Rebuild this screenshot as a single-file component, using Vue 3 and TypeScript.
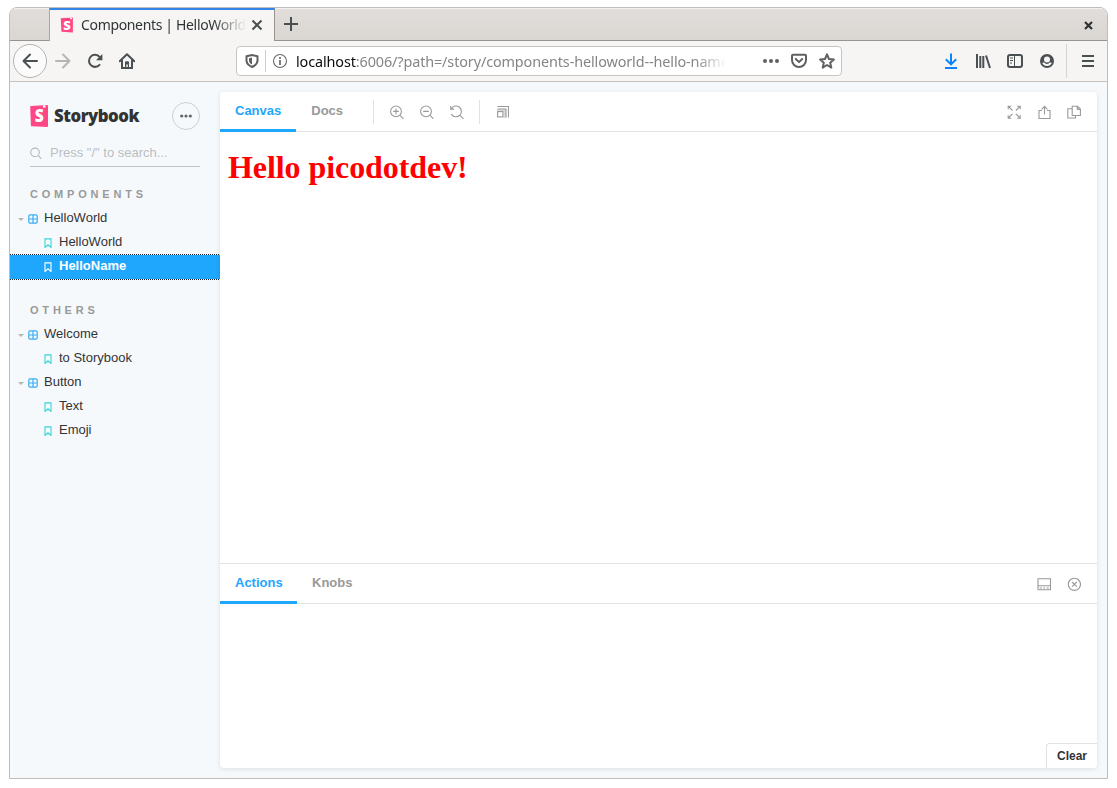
<script setup lang="ts">
interface StoryRow {
  label: string
  kind: 'component' | 'story'
  selected?: boolean
}
interface StoryGroup {
  title: string
  rows: StoryRow[]
}

const groups: StoryGroup[] = [
  {
    title: 'COMPONENTS',
    rows: [
      { label: 'HelloWorld', kind: 'component' },
      { label: 'HelloWorld', kind: 'story' },
      { label: 'HelloName', kind: 'story', selected: true },
    ],
  },
  {
    title: 'OTHERS',
    rows: [
      { label: 'Welcome', kind: 'component' },
      { label: 'to Storybook', kind: 'story' },
      { label: 'Button', kind: 'component' },
      { label: 'Text', kind: 'story' },
      { label: 'Emoji', kind: 'story' },
    ],
  },
]
</script>

<template>
  <div class="window">
    <header class="titlebar">
      <div class="tab">
        <svg class="favicon" width="14" height="16" viewBox="0 0 14 16">
          <path d="M.8 1.3 12.9.4v15.2l-11.500-.8z" fill="#ff4785" />
          <path d="M10.200.5h1.600v2l-.8-.5-.8.5z" fill="#fff" />
          <text x="6.900" y="12.700" text-anchor="middle" class="mark-small">S</text>
        </svg>
        <span class="tab-title">Components | HelloWorld</span>
        <svg class="tab-close" width="12" height="12" viewBox="0 0 12 12">
          <path d="m1.500 1.500 9 9m0-9-9 9" class="ff" />
        </svg>
      </div>
      <svg class="new-tab" width="16" height="16" viewBox="0 0 16 16">
        <path d="M8 1v14M1 8h14" class="ff" />
      </svg>
      <svg class="win-close" width="9" height="9" viewBox="0 0 9 9">
        <path d="m1 1 7 7m0-7-7 7" stroke="#2e3436" stroke-width="2.200" fill="none" />
      </svg>
    </header>

    <nav class="toolbar">
      <span class="back">
        <svg width="16" height="16" viewBox="0 0 16 16">
          <path d="M15 8H1.500M8 1.500 1.500 8 8 14.500" class="ff round" />
        </svg>
      </span>
      <svg class="nav-icon forward" width="16" height="16" viewBox="0 0 16 16">
        <path d="M1 8h13.500M8 1.500 14.500 8 8 14.500" class="ff round faded" />
      </svg>
      <svg class="nav-icon" width="16" height="16" viewBox="0 0 16 16">
        <path d="M13 11.200A6 6 0 1 1 12.600 4" class="ff" />
        <path d="M15.400 1v6.300H9z" fill="#4a4f51" />
      </svg>
      <svg class="nav-icon" width="16" height="16" viewBox="0 0 16 16">
        <path d="M.7 8.300 8 1.200l7.300 7.100" class="ff round" />
        <path d="M3 7v8h10V7" class="ff" />
        <path d="M6 14.500V9.300q0-1 1-1h2q1 0 1 1v5.200H8.800v-3H7.300v3z" fill="#4a4f51" />
      </svg>

      <div class="urlbar">
        <svg class="shield" width="14" height="16" viewBox="0 0 14 16">
          <path d="M7 2 12.500 3.300v4.200c0 3-2.300 5-5.500 6.500-3.200-1.500-5.500-3.500-5.500-6.500V3.300z" stroke="#5f6061" stroke-width="2" fill="none" stroke-linejoin="round" />
          <path d="M7 4.500v7C5 10.500 4 9.200 4 7.400V5.200z" fill="#5f6061" />
        </svg>
        <i class="url-divider"></i>
        <svg class="info" width="16" height="16" viewBox="0 0 16 16">
          <circle cx="8" cy="8" r="6.500" fill="none" stroke="#69696b" stroke-width="1.100" />
          <path d="M8 7v5M8 4v2" stroke="#69696b" stroke-width="1.700" />
        </svg>
        <span class="url"><b>localhost</b>:6006/?path=/story/components-helloworld--hello-name</span>
        <svg class="dots" width="16" height="16" viewBox="0 0 16 16">
          <circle cx="2" cy="8" r="2" /><circle cx="8" cy="8" r="2" /><circle cx="14" cy="8" r="2" />
        </svg>
        <svg class="pocket" width="16" height="16" viewBox="0 0 16 16">
          <path d="M2 1.800h12q1 0 1 1V7a7 7 0 0 1-14 0V2.800q0-1 1-1z" class="dim" />
          <path d="m4.800 6 3.200 3.100L11.200 6" class="dim round" />
        </svg>
        <svg width="16" height="16" viewBox="0 0 16 16">
          <path d="m8 1.400 2 4.600 4.900.4-3.700 3.300 1.100 4.900L8 12l-4.300 2.600 1.100-4.900L1.100 6.400 6 6z" class="dim" stroke-linejoin="round" />
        </svg>
      </div>

      <div class="toolbar-right">
        <svg width="16" height="16" viewBox="0 0 16 16">
          <path d="M8 .5V11M2.800 6.200 8 11.400l5.200-5.200M2 15h12" fill="none" stroke="#0a84ff" stroke-width="2" />
        </svg>
        <svg width="16" height="16" viewBox="0 0 16 16">
          <path d="M2 1v14M5.300 3v12M8.300 3v12M11 2.500 15 15" class="ff thin" />
        </svg>
        <svg width="16" height="16" viewBox="0 0 16 16">
          <rect x="1" y="2" width="14" height="12" rx="2" class="ff" />
          <path d="M7.500 2v12M3 5h3M3 7.500h3M3 10h2" stroke="#4a4f51" stroke-width="1" />
        </svg>
        <svg width="16" height="16" viewBox="0 0 16 16">
          <circle cx="8" cy="8" r="7" fill="#4a4f51" />
          <circle cx="8" cy="6.500" r="3" fill="#f6f5f4" />
          <path d="M3.200 10q1.300 3 4.800 3t4.800-3L11 9.300Q9.800 11 8 11T5 9.300z" fill="#f6f5f4" />
        </svg>
        <i class="menu-divider"></i>
        <svg width="16" height="16" viewBox="0 0 16 16">
          <path d="M2 3h12M2 8h12M2 13h12" class="ff" />
        </svg>
      </div>
    </nav>

    <main class="content">
      <aside class="sidebar">
        <div class="brand">
          <svg width="18" height="22" viewBox="0 0 18 22">
            <path d="M1.200.9 17 .1q1 0 1 .8v20.200q0 1-1 .9L1.700 21.300q-.8 0-.8-.9L.2 2q0-1 1-1.100z" fill="#ff4785" />
            <path d="m13.100.3 2.300-.2.100 3-1.200-.9-1.300.9z" fill="#fff" />
            <text transform="translate(9.200 17.300) scale(.92 1)" text-anchor="middle" class="mark">S</text>
          </svg>
          <span class="brand-name">Storybook</span>
          <span class="more">
            <svg width="12" height="4" viewBox="0 0 12 4" fill="#666">
              <circle cx="1.700" cy="2" r="1.600" /><circle cx="6" cy="2" r="1.600" /><circle cx="10.300" cy="2" r="1.600" />
            </svg>
          </span>
        </div>
        <div class="search">
          <svg width="12" height="12" viewBox="0 0 12 12">
            <circle cx="5" cy="5.400" r="4.300" class="line" /><path d="m8.200 8.600 3.100 3.100" class="line" />
          </svg>
          <span>Press "/" to search...</span>
        </div>
        <section v-for="group in groups" :key="group.title" class="group">
          <h2>{{ group.title }}</h2>
          <div
            v-for="(row, index) in group.rows"
            :key="index"
            class="row"
            :class="[row.kind, { selected: row.selected }]"
          >
            <template v-if="row.kind === 'component'">
              <i class="caret"></i>
              <svg width="10" height="10" viewBox="0 0 10 10">
                <rect x=".8" y=".8" width="8.400" height="8.400" rx="1.400" class="grid" />
                <path d="M5 1v8M1 5h8" class="grid" />
              </svg>
            </template>
            <svg v-else width="8" height="10" viewBox="0 0 8 10">
              <path d="M1 .9h6v8.600L4 6.800 1 9.500z" class="bookmark" />
            </svg>
            <span>{{ row.label }}</span>
          </div>
        </section>
      </aside>

      <div class="card">
        <div class="bar">
          <span class="bar-tab active">Canvas</span>
          <span class="bar-tab">Docs</span>
          <i class="divider first"></i>
          <div class="tools">
            <svg width="14" height="14" viewBox="0 0 14 14">
              <circle cx="6" cy="6.400" r="5.400" class="line" /><path d="m10 10.400 3.500 3.400M3.200 6.400h5.600M6 3.600v5.600" class="line" />
            </svg>
            <svg width="14" height="14" viewBox="0 0 14 14">
              <circle cx="6" cy="6.400" r="5.400" class="line" /><path d="m10 10.400 3.500 3.400M3.200 6.400h5.600" class="line" />
            </svg>
            <svg width="14" height="14" viewBox="0 0 14 14">
              <path d="M1.300 3.700a5.400 5.400 0 1 1 0 5.400M.7.900v3.200h3.400M10 10.400l3.500 3.400" class="line" />
            </svg>
          </div>
          <i class="divider second"></i>
          <svg class="viewport" width="12" height="12" viewBox="0 0 12 12">
            <path d="M.5.500h11v11M.5 3h8.500v8.500" class="line" />
            <rect x=".6" y="5.600" width="5.300" height="5.300" class="line" />
            <path d="M0 3h9v9H6.500V5.500H0z" fill="#999" opacity=".35" />
          </svg>
          <div class="tools end">
            <svg width="14" height="14" viewBox="0 0 14 14">
              <path d="M1.200 4.200V1.200h3M1.400 1.400l4.100 4.100M10.200 1.200h3v3M13 1.400 8.900 5.500M1.200 10.200v3h3M1.400 13l4.100-4.100M10.200 13.200h3v-3M13 13 8.900 8.900" class="line" />
            </svg>
            <svg width="14" height="14" viewBox="0 0 14 14">
              <path d="M5 5.500H2v8h11v-8h-3M7.500 9.500V1.500M4.600 4.300l2.900-2.900 2.900 2.900" class="line" />
            </svg>
            <svg width="14" height="14" viewBox="0 0 14 14">
              <path d="M5 3.700H.8v9.300h7.700v-2.400" class="line" />
              <path d="M5.200 1.200h5.300l2.900 2.900v6.400H5.200zM10.300 1.200v3.200h3.100" class="line" />
            </svg>
          </div>
        </div>
        <div class="preview"><h1>Hello picodotdev!</h1></div>
        <div class="bar addon-bar">
          <span class="bar-tab active actions-tab">Actions</span>
          <span class="bar-tab">Knobs</span>
          <div class="tools end">
            <svg width="14" height="14" viewBox="0 0 14 14">
              <path d="M1 1.700h12.500v11H1zM1 8.700h12.500" class="line" />
              <path d="M2.800 11h2M6.200 11h2M9.700 11h2" class="line" />
            </svg>
            <svg width="14" height="14" viewBox="0 0 14 14">
              <circle cx="7.400" cy="7.300" r="6.100" class="line" /><path d="m5.100 5 4.600 4.600m0-4.600L5.100 9.600" class="line" />
            </svg>
          </div>
        </div>
        <div class="actions"><button class="clear">Clear</button></div>
      </div>
    </main>
  </div>
</template>

<style>
body { background: #fff; }
</style>

<style scoped>
* { box-sizing: border-box; }
svg { flex: none; display: block; }
.window {
  width: 1099px; height: 772px; margin: 7px 9px 0; overflow: hidden;
  display: flex; flex-direction: column;
  border: 1px solid #bfbdbb; border-radius: 8px 8px 0 0;
}
.titlebar {
  height: 33px; flex: none; display: flex; align-items: center;
  padding-left: 39px; padding-right: 14px;
  background: linear-gradient(#e1dedb, #dad6d2);
  border-bottom: 1px solid #979390;
  box-shadow: inset 0 1px #f4f2f1;
}
.tab {
  width: 226px; height: 33px; margin-bottom: -1px; padding: 0 0 2px 10px;
  display: flex; align-items: center;
  background: #f6f5f4; border-top: 2px solid #3584e4;
  border-left: 1px solid #aaa6a3; border-right: 1px solid #979390;
}
.tab-title {
  width: 166px; margin-left: 7px; overflow: hidden; white-space: nowrap;
  font: 14px/20px "Noto Sans", sans-serif; letter-spacing: -.34px; color: #2e3436;
  mask-image: linear-gradient(to right, #000 132px, transparent 165px);
}
.tab-close { margin-left: 4px; }
.new-tab { margin-left: 8px; }
.win-close { margin-left: auto; margin-top: 2px; }
.ff { fill: none; stroke: #4a4f51; stroke-width: 2; }
.round { stroke-linecap: round; stroke-linejoin: round; }
.faded { stroke: #b5b5b5; }
.mark, .mark-small { font: 800 17px "Open Sans", sans-serif; fill: #fff; }
.mark-small { font-size: 13px; }

.toolbar {
  height: 41px; flex: none; display: flex; align-items: center;
  padding-left: 3px; background: #f6f5f4; border-bottom: 1px solid #c5c2c0;
}
.back {
  width: 34px; height: 34px; display: flex; align-items: center; justify-content: center;
  border: 1px solid #b5b3b1; border-radius: 50%; background: #fbfbfb;
}
.nav-icon { margin-right: 16px; }
.forward { margin-left: 8px; }
.urlbar {
  width: 606px; height: 30px; margin-left: 85px; padding: 0 6px 0 8px;
  display: flex; align-items: center;
  border: 1px solid #c9c4c0; border-radius: 4px; background: #fff;
}
.url-divider { width: 1px; height: 22px; margin-left: 6px; background: #ccc; }
.info { margin-left: 6px; }
.url {
  width: 431px; margin-left: 8px; padding-top: 1px; overflow: hidden; white-space: nowrap;
  font: 14.400px/22px "Noto Sans", sans-serif; letter-spacing: -.11px; color: #858585;
  mask-image: linear-gradient(to right, #000 400px, transparent 430px);
}
.url b { font-weight: 400; color: #0c0c0d; }
.dots { margin-left: auto; fill: #5f6061; }
.pocket { margin: 0 12px; }
.dim { fill: none; stroke: #5f6061; stroke-width: 2; }
.thin { stroke-width: 2; }
.toolbar-right { display: flex; align-items: center; gap: 16px; margin-left: auto; padding-right: 11px; }
.menu-divider { width: 1px; height: 34px; margin: 0 -3px 0 -5px; background: #d6d3d1; }

.content { flex: 1; display: flex; min-height: 0; padding: 10px 10px 10px 0; background: #f6f9fc; }
.sidebar { width: 210px; flex: none; font: 13px/20px "Liberation Sans", sans-serif; color: #333; }
.brand { height: 28px; margin: 10px 20px 0; display: flex; align-items: center; }
.brand-name {
  margin-left: 6px; font: 800 16.800px/28px "Open Sans", sans-serif; letter-spacing: -.48px;
}
.more {
  width: 28px; height: 28px; margin-left: auto; display: flex; align-items: center; justify-content: center;
  border: 1px solid #ccd0d3; border-radius: 50%;
}
.search {
  height: 27px; margin: 10px 20px 0; display: flex; align-items: center;
  border-bottom: 1px solid #c0c4c7; color: #bbbec1;
}
.search span { margin-left: 8px; padding-bottom: 1px; }
.search .line { stroke: #b5b8ba; }
.group { margin-bottom: 20px; }
.group h2 {
  height: 40px; margin: 0; padding: 17px 20px 0;
  font: bold 11px/20px "Liberation Sans", sans-serif; letter-spacing: 3.800px; color: #999;
}
.group + .group h2 { height: 24px; padding-top: 1px; }
.row { height: 24px; display: flex; align-items: center; }
.row span { padding-bottom: 3px; }
.row.component { padding-left: 8px; }
.row.component span { margin-left: 6px; }
.row.story { padding-left: 34px; }
.row.story span { margin-left: 7px; }
.caret { margin-right: 4px; border: 3px solid transparent; border-top-color: #b3b5b7; border-bottom: 0; }
.grid { fill: none; stroke: #37adf5; stroke-width: 1.200; }
.bookmark { fill: none; stroke: #37d5d3; stroke-width: 1.100; }
.selected { background: #1ea7fd; color: #fff; font-weight: bold; outline: 1px dotted #222; }
.selected .bookmark { stroke: #fff; }

.card {
  flex: 1; display: flex; flex-direction: column; overflow: hidden;
  background: #fff; border-radius: 4px; box-shadow: 0 1px 5px rgba(0, 0, 0, .1);
}
.bar {
  height: 40px; flex: none; display: flex; align-items: center;
  border-bottom: 1px solid #e2e2e2; font: bold 13px/34px "Liberation Sans", sans-serif;
}
.bar-tab { height: 40px; margin-bottom: -1px; padding: 2px 15px 0; border-bottom: 3px solid transparent; color: #999; }
.bar-tab.active { color: #1ea7fd; border-color: #1ea7fd; }
.actions-tab { width: 77px; }
.divider { width: 1px; height: 24px; background: #e2e2e2; }
.first { margin-left: 15px; }
.second { margin: 0 17px 0 15px; }
.viewport { margin-top: 1px; }
.tools { display: flex; gap: 16px; margin-left: 16px; }
.end { margin-left: auto; margin-right: 16px; }
.line { fill: none; stroke: #999; stroke-width: 1.100; }
.preview { height: 431px; flex: none; padding-left: 8px; }
.preview h1 { margin: 17px 0 0; font: bold 32px/37px "Liberation Serif", serif; letter-spacing: -.07px; color: #f00; }
.addon-bar { height: 41px; border-top: 1px solid #e2e2e2; }
.actions { flex: 1; display: flex; align-items: flex-end; justify-content: flex-end; }
.clear {
  height: 25px; width: 51px; padding: 0 0 1px; border: 1px solid #e2e2e2; border-width: 1px 0 0 1px;
  border-radius: 4px 0 0; background: #fff; color: #333; font: bold 12px/20px "Liberation Sans", sans-serif;
}
</style>
